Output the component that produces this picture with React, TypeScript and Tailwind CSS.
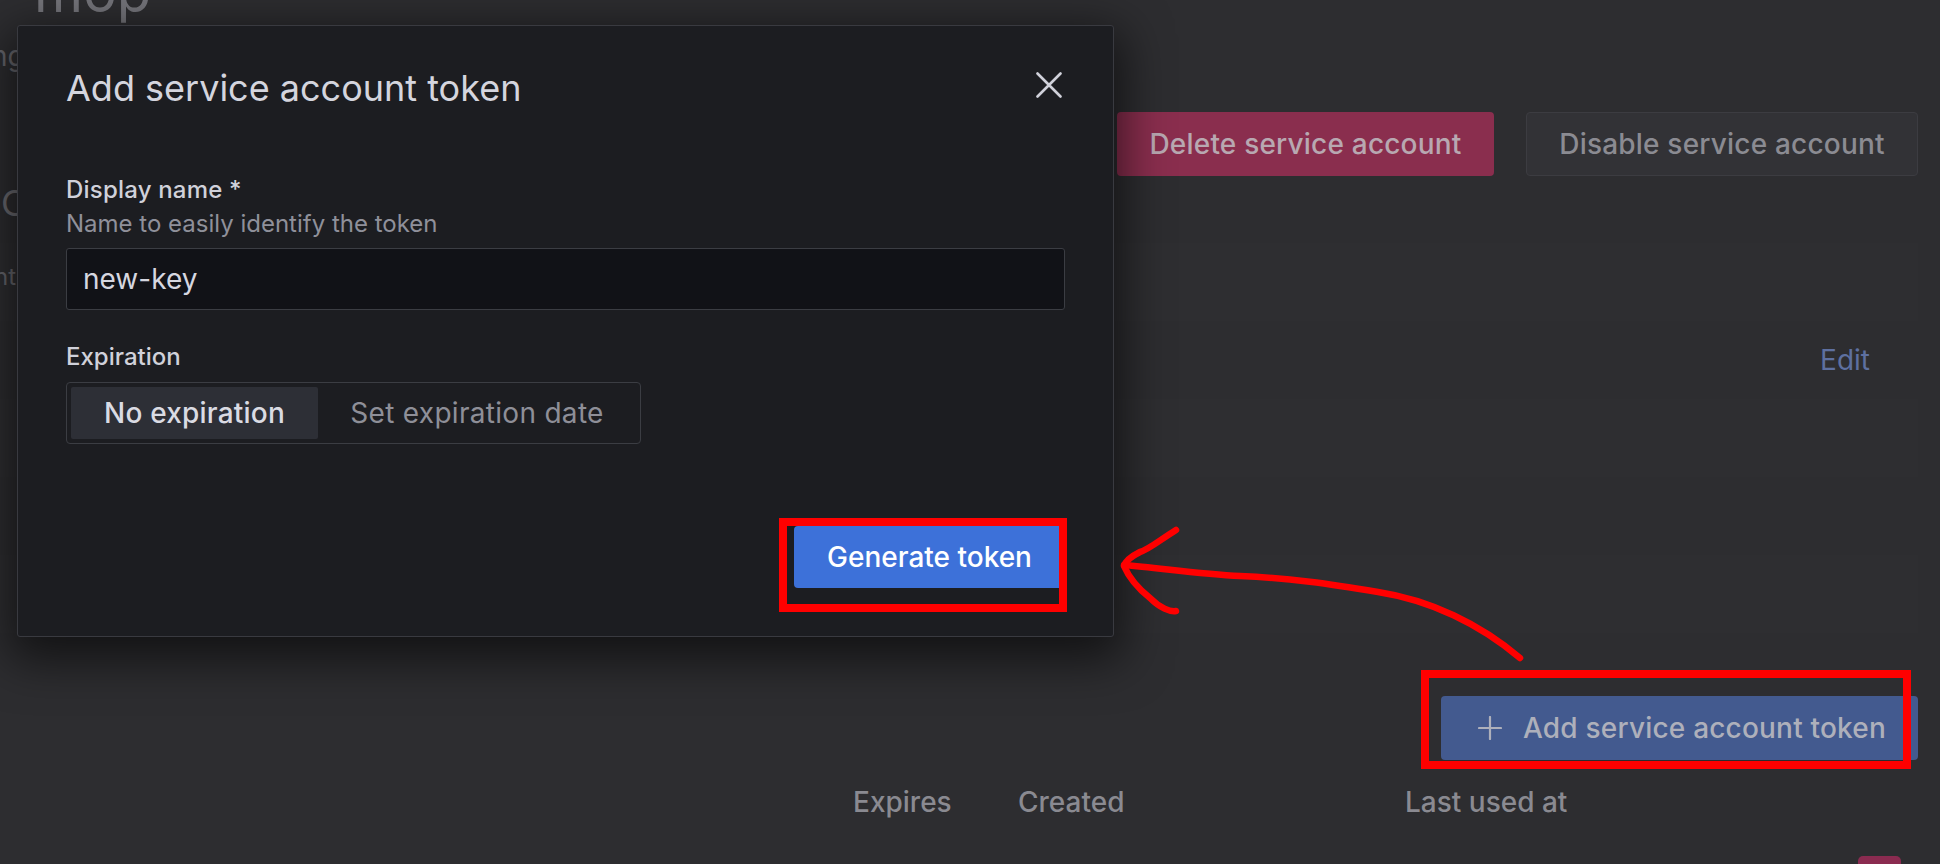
import React from 'react';

function CloseIcon() {
  return (
    <svg width="26" height="26" viewBox="0 0 26 26" fill="none" stroke="currentColor" strokeWidth="2.6" strokeLinecap="round">
      <path d="M1.5 1.5L24.5 24.5M24.5 1.5L1.5 24.5" />
    </svg>
  );
}

function PlusIcon() {
  return (
    <svg width="24" height="24" viewBox="0 0 24 24" fill="none" stroke="currentColor" strokeWidth="2.2" strokeLinecap="round">
      <path d="M12 1v22M1 12h22" />
    </svg>
  );
}

// the page behind the dialog, already dimmed by the backdrop
function BackgroundPage() {
  const rows = ['nti', '', '', '', ''];
  return (
    <div className="flex flex-col pr-[22px] text-[28px] leading-[1.25]">
      {/* Header */}
      <div className="flex h-[176px] shrink-0 items-start justify-between">
        <div className="flex flex-col">
          <h1 className="ml-[-14px] mt-[-36px] text-[56px] leading-none text-[#75757b]">
            r<span className="ml-[27px]">mop</span>
          </h1>
          <p className="ml-[-9px] mt-[19px] text-[#67676d]">ng</p>
        </div>
        <div className="mt-[112px] flex gap-[32px]">
          <button className="h-[64px] w-[377px] rounded-[4px] bg-[#8a2e4e] font-medium tracking-[0.2px] text-[#b8a8b1]">
            Delete service account
          </button>
          <button className="h-[64px] w-[392px] rounded-[4px] border border-[#3c3c41] bg-[#323236] font-medium tracking-[0.2px] text-[#8b8b92]">
            Disable service account
          </button>
        </div>
      </div>

      {/* Information */}
      <h2 className="ml-[1px] mt-[9px] shrink-0 text-[36px] leading-none text-[#6c6c72]">Co</h2>
      <div className="mt-[22px] flex shrink-0 flex-col">
        {rows.map((label, i) => (
          <div
            key={i}
            className={`flex h-[78px] shrink-0 items-center justify-between ${i % 2 === 0 ? 'bg-[#2e2e31]' : 'bg-[#2d2d30]'}`}
          >
            <span className="ml-[-6px] mt-[-10px] text-[24px] text-[#68686e]">{label}</span>
            {i === 1 && <span className="mr-[48px] text-[#5e70a0]">Edit</span>}
          </div>
        ))}
      </div>

      {/* Tokens */}
      <div className="mt-[63px] flex shrink-0 justify-end">
        <button className="flex h-[64px] w-[477px] items-center gap-[21px] rounded-[4px] bg-[#435a8f] pl-[37px] font-medium tracking-[0.2px] text-[#aeb0bb]">
          <PlusIcon />
          Add service account token
        </button>
      </div>
      <div className="flex h-[82px] shrink-0 items-center pt-[2px] font-medium text-[#8a8a91]">
        <div className="w-[853px] shrink-0" />
        <div className="w-[165px] shrink-0">Expires</div>
        <div className="w-[387px] shrink-0">Created</div>
        <div>Last used at</div>
      </div>
      <div className="flex shrink-0 justify-end pr-[17px] pt-[14px]">
        <div className="h-[44px] w-[43px] rounded-[5px] bg-[#8a2b50]" />
      </div>
    </div>
  );
}

function TokenModal() {
  return (
    <div className="absolute left-[17px] top-[25px] flex h-[612px] w-[1097px] flex-col rounded-[3px] border border-[#393a40] bg-[#1c1d21] px-[48px] pt-[40px] shadow-[0_14px_48px_8px_rgba(0,0,0,0.6)]">
      {/* Header */}
      <div className="flex h-[45px] items-center justify-between">
        <h2 className="text-[36px] leading-[1.25] text-[#d4d5de]">Add service account token</h2>
        <button className="mb-[7px] mr-[3px] text-[#d0d1da]">
          <CloseIcon />
        </button>
      </div>

      {/* Display name */}
      <label className="mt-[64px] text-[24px] font-medium leading-[1.25] tracking-[0.2px] text-[#d0d1da]">Display name *</label>
      <p className="mt-[4px] text-[24px] leading-[1.25] text-[#8f909a]">Name to easily identify the token</p>
      <div className="mt-[9px] flex h-[62px] items-center rounded-[3px] border border-[#3b3d43] bg-[#111217] px-[16px] text-[28px] text-[#d6d7e0]">
        new-key
      </div>

      {/* Expiration */}
      <label className="mt-[32px] text-[24px] font-medium leading-[1.25] text-[#d0d1da]">Expiration</label>
      <div className="mt-[10px] flex h-[62px] self-start rounded-[4px] border border-[#3b3d43] p-[4px] text-[28px]">
        <div className="flex w-[247px] items-center justify-center rounded-[2px] bg-[#2d2f36] font-medium tracking-[0.2px] text-[#dadbe3]">
          No expiration
        </div>
        <div className="flex w-[318px] items-center justify-center tracking-[0.3px] text-[#8e8f98]">Set expiration date</div>
      </div>

      {/* Footer */}
      <div className="mt-[82px] flex justify-end">
        <button className="h-[62px] w-[271px] rounded-[4px] bg-[#3d71d9] text-[28px] font-medium text-white">
          Generate token
        </button>
      </div>
    </div>
  );
}

function Annotations() {
  return (
    <>
      <div className="absolute left-[779px] top-[518px] h-[94px] w-[288px] border-[8px] border-[#ff0000]" />
      <div className="absolute left-[1421px] top-[670px] h-[99px] w-[490px] border-[8px] border-[#ff0000]" />
      <svg className="pointer-events-none absolute inset-0" width="1940" height="864" fill="none" stroke="#ff0000" strokeWidth="6.5" strokeLinecap="round" strokeLinejoin="round">
        <path d="M1520 658 C 1480 624, 1430 600, 1378 592 C 1330 584, 1290 578, 1240 576 C 1200 574, 1160 568, 1124 565" />
        <path d="M1176 530 C 1160 540, 1148 550, 1140 552 C 1132 556, 1126 560, 1124 566 C 1130 580, 1140 590, 1150 598 C 1160 608, 1170 612, 1176 611" />
      </svg>
    </>
  );
}

export default function App() {
  return (
    <div className="relative h-[864px] w-full overflow-hidden bg-[#2d2d30] font-['Inter',sans-serif]">
      <BackgroundPage />
      <TokenModal />
      <Annotations />
    </div>
  );
}
